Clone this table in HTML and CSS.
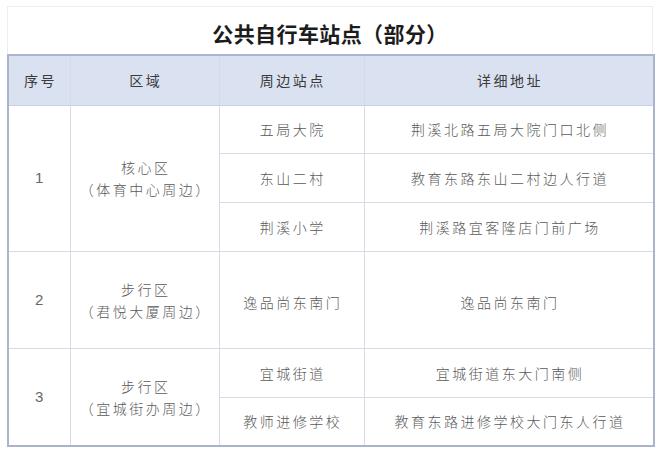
FILE: index.html
```html
<!DOCTYPE html>
<html lang="zh-CN">
<head>
<meta charset="utf-8">
<title>公共自行车站点（部分）</title>
<link rel="stylesheet" href="styles.css">
</head>
<body>
<div class="sheet">
  <div class="title">公共自行车站点（部分）</div>
  <table class="grid">
    <colgroup>
      <col class="c-no">
      <col class="c-area">
      <col class="c-site">
      <col class="c-addr">
    </colgroup>
    <thead>
      <tr class="r-head">
        <th>序号</th>
        <th>区域</th>
        <th>周边站点</th>
        <th>详细地址</th>
      </tr>
    </thead>
    <tbody>
      <tr class="r-a">
        <td class="num" rowspan="3">1</td>
        <td rowspan="3"><span class="ln">核心区</span><span class="ln">（体育中心周边）</span></td>
        <td>五局大院</td>
        <td>荆溪北路五局大院门口北侧</td>
      </tr>
      <tr class="r-b">
        <td>东山二村</td>
        <td>教育东路东山二村边人行道</td>
      </tr>
      <tr class="r-b">
        <td>荆溪小学</td>
        <td>荆溪路宜客隆店门前广场</td>
      </tr>
      <tr class="r-big">
        <td class="num">2</td>
        <td><span class="ln">步行区</span><span class="ln">（君悦大厦周边）</span></td>
        <td class="low">逸品尚东南门</td>
        <td class="low">逸品尚东南门</td>
      </tr>
      <tr class="r-b">
        <td class="num" rowspan="2">3</td>
        <td rowspan="2"><span class="ln">步行区</span><span class="ln">（宜城街办周边）</span></td>
        <td>宜城街道</td>
        <td>宜城街道东大门南侧</td>
      </tr>
      <tr class="r-b">
        <td>教师进修学校</td>
        <td>教育东路进修学校大门东人行道</td>
      </tr>
    </tbody>
  </table>
</div>
</body>
</html>
```

FILE: styles.css
```css
html, body {
  margin: 0;
  padding: 0;
  background: #ffffff;
}

body {
  font-family: "Noto Sans CJK SC", "Noto Sans", sans-serif;
}

.sheet {
  width: 646px;
  margin: 6px 0 0 7px;
}

.title {
  height: 48px;
  box-sizing: border-box;
  border: 1px solid #eceef2;
  border-bottom: none;
  padding-top: 5px;
  display: flex;
  align-items: center;
  justify-content: center;
  font-size: 21px;
  font-weight: 700;
  color: #1c1c1c;
  letter-spacing: 0.4px;
}

.grid {
  width: 646px;
  table-layout: fixed;
  border-collapse: collapse;
  border-top: 2px solid #a9b6cd;
  border-left: 2px solid #aab4ca;
  border-right: 2px solid #aab4ca;
  border-bottom: 2px solid #aab4ca;
}

.c-no { width: 62px; }
.c-area { width: 149px; }
.c-site { width: 145px; }
.c-addr { width: 290px; }

.grid th,
.grid td {
  padding: 0 0 0 2.5px;
  text-align: center;
  vertical-align: middle;
  border: 1px solid #d5dce8;
  letter-spacing: 2.5px;
  font-size: 14px;
  line-height: 22px;
}

.grid th {
  background: #dae2f2;
  color: #3a3a3a;
  font-weight: 400;
  border-bottom-color: #c9d2e2;
}

.grid td {
  color: #5a5a5a;
  font-weight: 300;
}

.r-head { height: 50px; }
.r-a { height: 48px; }
.r-b { height: 49px; }
.r-big { height: 97px; }

.ln {
  display: block;
}

.grid td.num {
  font-family: "Liberation Sans", Arial, sans-serif;
  font-size: 15px;
  letter-spacing: 0;
  padding: 0;
  color: #666666;
}

.grid td.low {
  padding-top: 4px;
}
```
